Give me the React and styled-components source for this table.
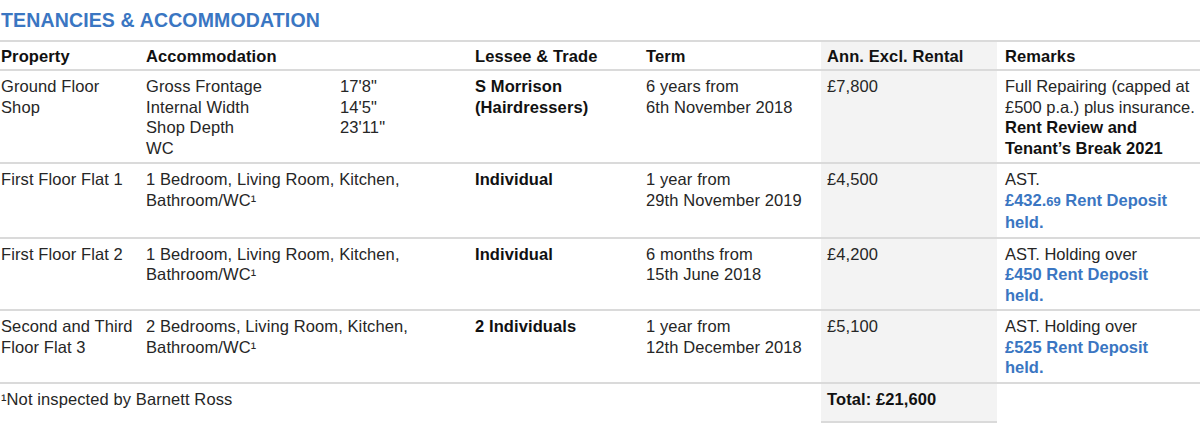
import React from "react";
import styled, { createGlobalStyle } from "styled-components";

const Global = createGlobalStyle`
  html, body { margin: 0; padding: 0; background: #ffffff; }
  body { font-family: "Liberation Sans", Arial, sans-serif; color: #1e1e1e; }
`;

const BLUE = "#3a76c2";
const LINE = "#dadada";
const SHADE = "#f3f3f3";

const Page = styled.div`
  width: 1200px;
  height: 430px;
  overflow: hidden;
`;

const Title = styled.h2`
  margin: 0;
  padding: 8px 0 8px 1px;
  height: 24px;
  font-size: 19.5px;
  line-height: 24px;
  font-weight: 700;
  color: ${BLUE};
  letter-spacing: 0.15px;
`;

const Table = styled.div`
  border-top: 2px solid ${LINE};
`;

const Row = styled.div`
  display: grid;
  grid-template-columns: 145px 330px 171px 175px 176px 1fr;
  border-bottom: ${(p) => (p.$footer ? "none" : `2px solid ${LINE}`)};
`;

const Cell = styled.div`
  padding: ${(p) =>
    p.$header ? "4px 0 3px" : p.$footer ? "5px 0 12px" : "5px 0 4px"};
  padding-left: ${(p) => p.$pl ?? 1}px;
  background: ${(p) => (p.$shaded ? SHADE : "transparent")};
  border-bottom: ${(p) => (p.$closed ? `2px solid ${LINE}` : "none")};
  grid-column: ${(p) => p.$span ?? "auto"};
  font-size: 16.5px;
  letter-spacing: ${(p) => (p.$tight ? "0" : "0.1px")};
  line-height: ${(p) => (p.$header ? "20px" : "20.5px")};
  font-weight: ${(p) => (p.$bold ? 700 : 400)};
  color: ${(p) => (p.$bold ? "#111" : "#262626")};
`;

const Line = styled.div`
  white-space: nowrap;
  font-weight: ${(p) => (p.$bold ? 700 : "inherit")};
  color: ${(p) => (p.$blue ? BLUE : p.$bold ? "#111" : "inherit")};
`;

const Dims = styled.div`
  display: grid;
  grid-template-columns: 194px auto;
  white-space: nowrap;
`;

const Small = styled.span`
  font-size: 13px;
`;

const Sup = styled.span`
  font-size: 16px;
`;

const columns = [
  { label: "Property" },
  { label: "Accommodation" },
  { label: "Lessee & Trade", pl: 0 },
  { label: "Term", pl: 0 },
  { label: "Ann. Excl. Rental", pl: 6, shaded: true },
  { label: "Remarks", pl: 8 },
];

const bathroom = ["Bathroom/WC", <Sup key="s">¹</Sup>];

const rows = [
  {
    property: ["Ground Floor", "Shop"],
    dims: [
      ["Gross Frontage", "17'8\""],
      ["Internal Width", "14'5\""],
      ["Shop Depth", "23'11\""],
      ["WC", ""],
    ],
    lessee: ["S Morrison", "(Hairdressers)"],
    term: ["6 years from", "6th November 2018"],
    rental: "£7,800",
    remarks: [
      { t: "Full Repairing (capped at" },
      { t: "£500 p.a.) plus insurance." },
      { t: "Rent Review and", bold: true },
      { t: "Tenant’s Break 2021", bold: true },
    ],
  },
  {
    property: ["First Floor Flat 1"],
    accom: ["1 Bedroom, Living Room, Kitchen,", bathroom],
    lessee: ["Individual"],
    term: ["1 year from", "29th November 2019"],
    rental: "£4,500",
    remarks: [
      { t: "AST." },
      { t: ["£432.", <Small key="c">69</Small>, " Rent Deposit"], blue: true },
      { t: "held.", blue: true },
    ],
  },
  {
    property: ["First Floor Flat 2"],
    accom: ["1 Bedroom, Living Room, Kitchen,", bathroom],
    lessee: ["Individual"],
    term: ["6 months from", "15th June 2018"],
    rental: "£4,200",
    remarks: [
      { t: "AST. Holding over" },
      { t: "£450 Rent Deposit", blue: true },
      { t: "held.", blue: true },
    ],
  },
  {
    property: ["Second and Third", "Floor Flat 3"],
    accom: ["2 Bedrooms, Living Room, Kitchen,", bathroom],
    lessee: ["2 Individuals"],
    term: ["1 year from", "12th December 2018"],
    rental: "£5,100",
    remarks: [
      { t: "AST. Holding over" },
      { t: "£525 Rent Deposit", blue: true },
      { t: "held.", blue: true },
    ],
  },
];

const Lines = ({ items }) =>
  items.map((l, i) => <Line key={i}>{l}</Line>);

export default function App() {
  return (
    <Page>
      <Global />
      <Title>TENANCIES &amp; ACCOMMODATION</Title>
      <Table>
        <Row>
          {columns.map((c) => (
            <Cell key={c.label} $header $bold $pl={c.pl} $shaded={c.shaded}>
              <Line>{c.label}</Line>
            </Cell>
          ))}
        </Row>
        {rows.map((r, i) => (
          <Row key={i}>
            <Cell>
              <Lines items={r.property} />
            </Cell>
            <Cell>
              {r.dims ? (
                <Dims>
                  {r.dims.map(([k, v]) => (
                    <React.Fragment key={k}>
                      <span>{k}</span>
                      <span>{v}</span>
                    </React.Fragment>
                  ))}
                </Dims>
              ) : (
                <Lines items={r.accom} />
              )}
            </Cell>
            <Cell $pl={0} $bold>
              <Lines items={r.lessee} />
            </Cell>
            <Cell $pl={0}>
              <Lines items={r.term} />
            </Cell>
            <Cell $pl={6} $shaded>
              <Line>{r.rental}</Line>
            </Cell>
            <Cell $pl={8} $tight>
              {r.remarks.map((m, j) => (
                <Line key={j} $bold={m.bold || m.blue} $blue={m.blue}>
                  {m.t}
                </Line>
              ))}
            </Cell>
          </Row>
        ))}
        <Row $footer>
          <Cell $footer $span="1 / 5">
            <Line>¹Not inspected by Barnett Ross</Line>
          </Cell>
          <Cell $footer $pl={6} $shaded $closed $bold>
            <Line>Total: £21,600</Line>
          </Cell>
          <Cell $footer />
        </Row>
      </Table>
    </Page>
  );
}
